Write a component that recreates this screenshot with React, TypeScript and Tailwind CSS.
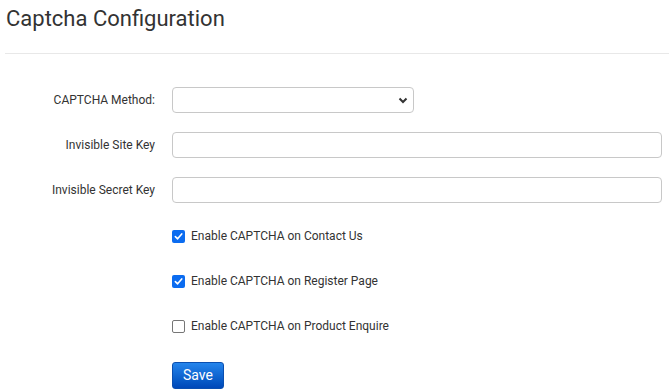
import React from "react";

function Check({ checked }: { checked: boolean }) {
  if (checked) {
    return (
      <span className="w-[13px] h-[13px] rounded-[2px] bg-[#0b6cf0] flex items-center justify-center shrink-0">
        <svg width="9" height="9" viewBox="0 0 10 10">
          <path d="M1.5 5.2 L4 7.6 L8.6 2.2" stroke="white" strokeWidth="1.8" fill="none" strokeLinecap="round" strokeLinejoin="round" />
        </svg>
      </span>
    );
  }
  return <span className="w-[13px] h-[13px] rounded-[2px] border border-[#767676] bg-white shrink-0" />;
}

export default function App() {
  const font = { fontFamily: "Roboto, 'Liberation Sans', sans-serif" };
  return (
    <div className="w-[669px] h-[392px] bg-white text-[#333] overflow-hidden" style={font}>
      <div className="pl-[6px] pt-[4px] h-[53px]">
        <h1 className="text-[22px] leading-[30px] text-[#333]">Captcha Configuration</h1>
      </div>
      <div className="ml-[5px] border-t border-[#e8e8e8]" />
      <div className="pt-[33px] flex flex-col">
        <div className="flex items-center h-[26px]">
          <label className="w-[155px] text-right text-[12px] pr-[0px]">CAPTCHA Method:</label>
          <div className="ml-[17px] w-[242px] h-[26px] border border-[#c8c8c8] rounded-[4px] flex items-center justify-end pr-[5px]">
            <svg width="10" height="7" viewBox="0 0 10 7">
              <path d="M1.5 1.5 L5 5 L8.5 1.5" stroke="#333" strokeWidth="2" fill="none" />
            </svg>
          </div>
        </div>
        <div className="flex items-center h-[26px] mt-[19px]">
          <label className="w-[155px] text-right text-[12px]">Invisible Site Key</label>
          <div className="ml-[17px] w-[490px] h-[26px] border border-[#c8c8c8] rounded-[4px]" />
        </div>
        <div className="flex items-center h-[26px] mt-[19px]">
          <label className="w-[155px] text-right text-[12px]">Invisible Secret Key</label>
          <div className="ml-[17px] w-[490px] h-[26px] border border-[#c8c8c8] rounded-[4px]" />
        </div>
        <div className="pl-[172px] flex flex-col">
          <div className="flex items-center gap-[6px] h-[26px] mt-[20px] text-[12px]">
            <Check checked />
            <span>Enable CAPTCHA on Contact Us</span>
          </div>
          <div className="flex items-center gap-[6px] h-[26px] mt-[19px] text-[12px]">
            <Check checked />
            <span>Enable CAPTCHA on Register Page</span>
          </div>
          <div className="flex items-center gap-[6px] h-[26px] mt-[19px] text-[12px]">
            <Check checked={false} />
            <span>Enable CAPTCHA on Product Enquire</span>
          </div>
          <button className="mt-[23px] w-[52px] h-[27px] rounded-[3px] text-white text-[14px] bg-gradient-to-b from-[#2585ec] to-[#0048b8] border border-[#0a4fb0]">
            Save
          </button>
        </div>
      </div>
    </div>
  );
}
